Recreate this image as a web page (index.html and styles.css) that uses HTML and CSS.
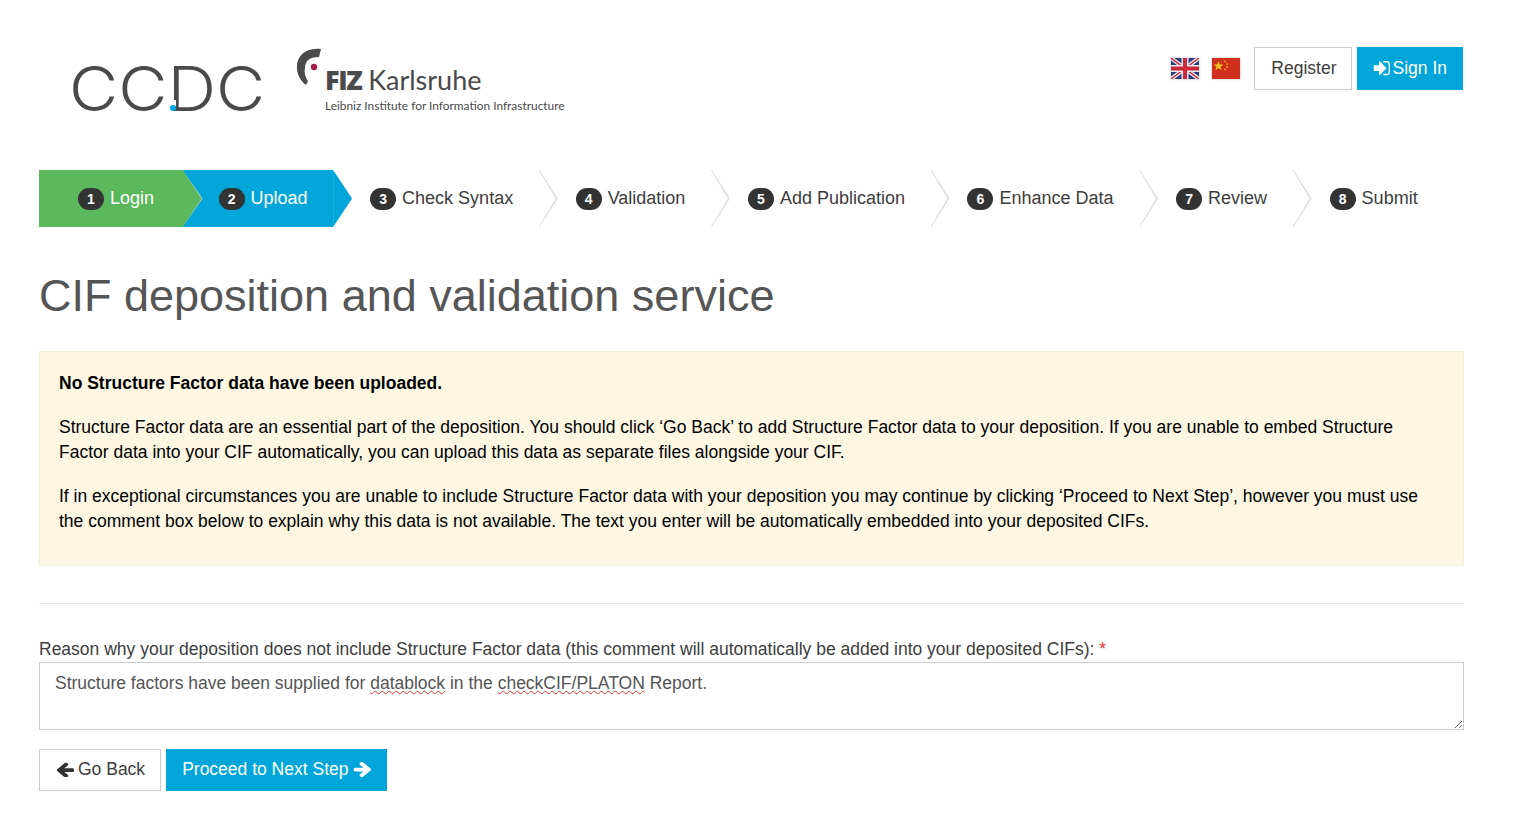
FILE: index.html
```html
<!DOCTYPE html>
<html lang="en">

<head>
	<meta charset="UTF-8">
	<title>CIF deposition and validation service</title>
	<link rel="stylesheet" href="styles.css">
</head>

<body>
	<header class="top">
		<div class="logos">
			<div class="ccdc-logo"><span class="ccdc-text">CCDC</span><span class="ccdc-gap"></span><span class="ccdc-dot"></span></div>
			<div class="fiz-logo">
				<svg class="fiz-mark" width="30" height="38" viewBox="0 0 30 38">
					<path d="M26 1 C9 -1 1 10 2 20 C2 27 6 33 11 37 L13 33 C10 29 9 24 10 20 C10 12 16 9 24 9 Z" fill="#4a4a4a"/>
					<circle cx="19" cy="19" r="3.2" fill="#a81f4f"/>
				</svg>
				<div class="fiz-name"><b>FIZ</b> Karlsruhe</div>
				<div class="fiz-sub">Leibniz Institute for Information Infrastructure</div>
			</div>
		</div>
		<nav class="account">
			<svg class="flag" width="28" height="21" viewBox="0 0 28 21">
				<rect width="28" height="21" fill="#2a3f7c"/>
				<path d="M0 0 L28 21 M28 0 L0 21" stroke="#e8e8ee" stroke-width="4"/>
				<path d="M0 0 L28 21 M28 0 L0 21" stroke="#c8283a" stroke-width="1.4"/>
				<path d="M14 0 V21 M0 10.5 H28" stroke="#e8e8ee" stroke-width="7"/>
				<path d="M14 0 V21 M0 10.5 H28" stroke="#c8283a" stroke-width="4"/>
			</svg>
			<svg class="flag flag-cn" width="28" height="21" viewBox="0 0 28 21">
				<rect width="28" height="21" fill="#cf2f1c"/>
				<path d="M6.5 3 L7.8 6.6 L11.4 6.6 L8.5 8.8 L9.6 12.2 L6.5 10.1 L3.4 12.2 L4.5 8.8 L1.6 6.6 L5.2 6.6 Z" fill="#f0c827"/>
				<circle cx="13" cy="3.5" r="0.9" fill="#e8a020"/>
				<circle cx="15" cy="6" r="0.9" fill="#e8a020"/>
				<circle cx="15" cy="9" r="0.9" fill="#e8a020"/>
				<circle cx="13" cy="11.5" r="0.9" fill="#e8a020"/>
			</svg>
			<a class="btn btn-plain btn-register" href="#">Register</a>
			<a class="btn btn-blue btn-signin" href="#">
				<svg class="icon" width="17" height="15" viewBox="64 256 1600 1344" preserveAspectRatio="none">
					<path fill="#fff" d="M1312 896q0 26-19 45l-544 544q-19 19-45 19t-45-19-19-45v-288h-448q-26 0-45-19t-19-45v-384q0-26 19-45t45-19h448v-288q0-26 19-45t45-19 45 19l544 544q19 19 19 45zm352-352v704q0 119-84.5 203.5t-203.5 84.5h-320q-13 0-22.5-9.5t-9.5-22.5q0-4-1-20t-.5-26.5 3-23.5 10-19.5 20.5-6.5h320q66 0 113-47t47-113v-704q0-66-47-113t-113-47h-312l-11.5-1-11.5-3-8-5.5-7-9-2-13.5q0-4-1-20t-.5-26.5 3-23.5 10-19.5 20.5-6.5h320q119 0 203.5 84.5t84.5 203.5z"/>
				</svg>
				Sign In
			</a>
		</nav>
	</header>

	<ol class="steps">
		<li class="step step-done"><span class="num">1</span>Login</li>
		<li class="step step-current"><span class="num">2</span>Upload</li>
		<li class="step"><span class="num">3</span>Check Syntax</li>
		<li class="step"><span class="num">4</span>Validation</li>
		<li class="step"><span class="num">5</span>Add Publication</li>
		<li class="step"><span class="num">6</span>Enhance Data</li>
		<li class="step"><span class="num">7</span>Review</li>
		<li class="step step-last"><span class="num">8</span>Submit</li>
	</ol>

	<h1>CIF deposition and validation service</h1>

	<div class="notice">
		<p><strong>No Structure Factor data have been uploaded.</strong></p>
		<p>Structure Factor data are an essential part of the deposition. You should click ‘Go Back’ to add Structure Factor data to your deposition. If you are unable to embed Structure Factor data into your CIF automatically, you can upload this data as separate files alongside your CIF.</p>
		<p>If in exceptional circumstances you are unable to include Structure Factor data with your deposition you may continue by clicking ‘Proceed to Next Step’, however you must use the comment box below to explain why this data is not available. The text you enter will be automatically embedded into your deposited CIFs.</p>
	</div>

	<hr>

	<div class="field-label">Reason why your deposition does not include Structure Factor data (this comment will automatically be added into your deposited CIFs): <span class="required">*</span></div>
	<div class="comment-box" role="textbox">Structure factors have been supplied for <span class="typo">datablock</span> in the <span class="typo">checkCIF/PLATON</span> Report.</div>

	<div class="actions">
		<a class="btn btn-plain btn-back" href="#">
			<svg class="icon" width="18" height="15" viewBox="128 128 1536 1536" preserveAspectRatio="none">
				<path fill="#333" d="M1664 896v128q0 53-32.5 90.5t-84.5 37.5h-704l293 294q38 36 38 90t-38 90l-75 75q-38 38-90 38-53 0-91-38l-651-652q-37-37-37-90 0-52 37-91l651-650q38-38 91-38 52 0 90 38l75 74q38 38 38 91t-38 91l-293 293h704q52 0 84.5 37.5t32.5 90.5z"/>
			</svg>
			Go Back
		</a>
		<a class="btn btn-blue btn-next" href="#">
			Proceed to Next Step
			<svg class="icon" width="18" height="15" viewBox="128 128 1536 1536" preserveAspectRatio="none">
				<path fill="#fff" d="M1664 960q0 54-37 91l-651 651q-39 37-91 37-51 0-90-37l-75-75q-38-38-38-91t38-91l293-293h-704q-52 0-84.5-37.5t-32.5-90.5v-128q0-53 32.5-90.5t84.5-37.5h704l-293-294q-38-36-38-90t38-90l75-75q38-38 90-38 53 0 91 38l651 651q37 35 37 90z" transform="translate(0 -64)"/>
			</svg>
		</a>
	</div>
</body>

</html>
```

FILE: styles.css
```css
body {
	margin: 0;
	padding: 0 69px 0 39px;
	font-family: "Liberation Sans", Arial, sans-serif;
	font-size: 17.5px;
	color: #3d3d3d;
	background-color: white;
}

.top {
	display: flex;
	justify-content: space-between;
	height: 170px;
}

.logos {
	display: flex;
	padding: 48px 0 0 31px;
}

.ccdc-logo {
	position: relative;
	width: 225px;
	height: 70px;
	color: #4a4a4a;
}
.ccdc-text {
	position: absolute;
	left: -1px;
	top: 1px;
	font-family: "Inter", sans-serif;
	font-weight: 300;
	font-size: 62px;
	line-height: 80px;
	transform: scaleX(1.09);
	transform-origin: left center;
}
/* breaks the stem of the D above the dot */
.ccdc-gap {
	position: absolute;
	left: 96px;
	top: 52px;
	width: 10px;
	height: 6px;
	background-color: white;
}
.ccdc-dot {
	position: absolute;
	left: 100px;
	top: 57px;
	width: 6px;
	height: 6px;
	border-radius: 50%;
	background-color: #00a6e0;
}

.fiz-logo {
	position: relative;
	padding: 16px 0 0 30px;
	color: #4a4a4a;
}
.fiz-mark {
	position: absolute;
	left: 0;
	top: 0;
}
.fiz-name {
	font-family: "Lato", sans-serif;
	font-size: 27px;
	line-height: 32px;
	white-space: nowrap;
}
.fiz-name b {
	font-family: "Open Sans", sans-serif;
	font-weight: 800;
	font-size: 27px;
	letter-spacing: -1.4px;
}
.fiz-sub {
	margin-top: 2px;
	font-family: "Lato", sans-serif;
	font-size: 11.9px;
	white-space: nowrap;
}

.account {
	display: flex;
	align-items: center;
	align-self: flex-start;
	margin: 47px 1px 0 0;
}
.flag {
	margin-right: 13px;
	filter: drop-shadow(0 0 1px #aaa);
}
.flag-cn {
	margin-right: 14px;
}

.btn {
	display: inline-flex;
	align-items: center;
	box-sizing: border-box;
	height: 43px;
	text-decoration: none;
	border: 1px solid transparent;
}
.btn-plain {
	padding: 0 15px 0 16px;
	color: #3d3d3d;
	background-color: white;
	border-color: #ccc;
}
.btn-register {
	padding-right: 14px;
}
.btn-blue {
	color: white;
	background-color: #00a6d9;
	border-color: #00a6d9;
	padding: 0 15px;
}
.btn-signin {
	gap: 3px;
	margin-left: 5px;
}
.icon {
	flex: none;
}

.steps {
	display: flex;
	margin: 0;
	padding: 0;
	height: 57px;
	font-size: 18px;
	list-style: none;
}
.step {
	position: relative;
	display: flex;
	align-items: center;
	padding: 0 25.5px 0 37px;
	white-space: nowrap;
}
/* the chevron on the right of every step */
.step::after {
	content: "";
	position: absolute;
	z-index: 2;
	top: 0;
	right: -19px;
	width: 19px;
	height: 57px;
	background-color: #ddd;
	clip-path: polygon(0 0, 1px 0, 100% 50%, 1px 100%, 0 100%, 17px 50%);
}
.step-last::after {
	display: none;
}
.step-done,
.step-current {
	color: white;
}
.step-done {
	padding-left: 39px;
	padding-right: 28.5px;
	background-color: #5cb85c;
}
.step-done::after {
	background-color: #5cb85c;
	clip-path: polygon(0 0, 100% 50%, 0 100%);
}
/* thin light line between the green and the blue step */
.step-done::before {
	content: "";
	position: absolute;
	z-index: 1;
	top: 0;
	right: -20px;
	width: 20px;
	height: 57px;
	background-color: #ccc;
	clip-path: polygon(0 0, 100% 50%, 0 100%);
}
.step-current {
	padding-left: 36px;
	padding-right: 25.5px;
	background-color: #00a6d9;
}
.step-current::after {
	background-color: #00a6d9;
	clip-path: polygon(0 0, 100% 50%, 0 100%);
}
.num {
	display: flex;
	align-items: center;
	justify-content: center;
	width: 26px;
	height: 22px;
	margin-right: 6px;
	border-radius: 11px;
	background-color: #333;
	color: white;
	font-size: 14px;
	font-weight: bold;
}

h1 {
	margin: 41px 0 27px;
	font-size: 45px;
	font-weight: normal;
	line-height: 56px;
	color: #555;
}

.notice {
	padding: 19px 19px 31px;
	color: black;
	background-color: #fcf6e3;
	border: 1px solid #f5eed9;
	line-height: 25px;
}
.notice p {
	margin: 0 0 19px;
}
.notice p:last-child {
	margin-bottom: 0;
}

hr {
	margin: 37px 0 33px;
	border: 0;
	border-top: 1px solid #e8e8e8;
}

.field-label {
	line-height: 25px;
}
.required {
	color: #e0352b;
}

.comment-box {
	box-sizing: border-box;
	height: 68px;
	margin-bottom: 19px;
	padding: 8px 15px;
	overflow: auto;
	resize: both;
	line-height: 25px;
	color: #555;
	background-color: white;
	border: 1px solid #ccc;
}
.typo {
	text-decoration: underline wavy #e0352b 1px;
	text-underline-offset: 1px;
}

.actions {
	display: flex;
	gap: 5px;
}
.actions .btn {
	height: 42px;
	padding-bottom: 2px;
}
.btn-back {
	gap: 4px;
}
.actions .btn-next {
	gap: 5px;
	padding-left: 15px;
	padding-right: 15px;
}
```
